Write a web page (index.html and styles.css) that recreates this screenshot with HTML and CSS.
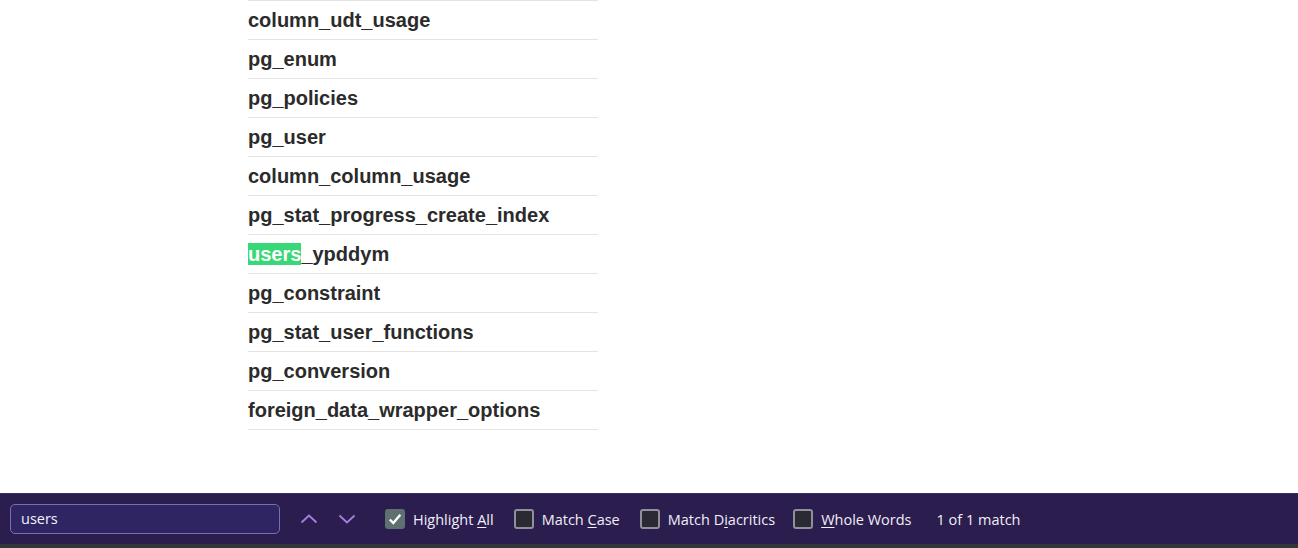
FILE: index.html
```html
<!DOCTYPE html>
<html>
<head>
<meta charset="utf-8">
<link rel="stylesheet" href="styles.css">
</head>
<body>
<div class="page">
  <ul class="tables">
    <li>column_udt_usage</li>
    <li>pg_enum</li>
    <li>pg_policies</li>
    <li>pg_user</li>
    <li>column_column_usage</li>
    <li>pg_stat_progress_create_index</li>
    <li><mark class="hit">users</mark>_ypddym</li>
    <li>pg_constraint</li>
    <li>pg_stat_user_functions</li>
    <li>pg_conversion</li>
    <li>foreign_data_wrapper_options</li>
  </ul>
</div>
<div class="findbar">
  <div class="find-input">users</div>
  <div class="nav">
    <svg class="chev" width="18" height="10" viewBox="0 0 18 10"><path d="M1.5 8.5 L9 1.5 L16.5 8.5" fill="none" stroke="#a67fe6" stroke-width="1.8"/></svg>
    <svg class="chev" width="18" height="10" viewBox="0 0 18 10"><path d="M1.5 1.5 L9 8.5 L16.5 1.5" fill="none" stroke="#a67fe6" stroke-width="1.8"/></svg>
  </div>
  <label class="opt opt-first"><span class="box checked"><svg width="14" height="12" viewBox="0 0 14 12"><path d="M1.8 6.5 L5.3 10 L12.3 1.8" fill="none" stroke="#fff" stroke-width="2.4"/></svg></span><span class="lbl">Highlight <u>A</u>ll</span></label>
  <label class="opt"><span class="box"></span><span class="lbl">Match <u>C</u>ase</span></label>
  <label class="opt"><span class="box"></span><span class="lbl">Match D<u>i</u>acritics</span></label>
  <label class="opt opt-tight"><span class="box"></span><span class="lbl"><u>W</u>hole Words</span></label>
  <span class="status">1 of 1 match</span>
</div>
<div class="bottom-strip"></div>
</body>
</html>
```
FILE: styles.css
```css
html, body {
  margin: 0;
  padding: 0;
  background: #ffffff;
  width: 1298px;
  height: 548px;
  overflow: hidden;
}
.page {
  height: 493px;
  padding-left: 248px;
  box-sizing: border-box;
}
.tables {
  list-style: none;
  margin: 0;
  padding: 0;
  width: 350px;
  border-top: 1px solid #e4e4e4;
}
.tables li {
  height: 38px;
  line-height: 38px;
  border-bottom: 1px solid #e4e4e4;
  font-family: "Liberation Sans", Arial, sans-serif;
  font-weight: bold;
  font-size: 20px;
  color: #2b2b2b;
  white-space: nowrap;
}
.hit {
  background: #38d878;
  color: #ffffff;
  padding: 0;
}
.findbar {
  height: 51px;
  background: #2b1d4e;
  border-top: 1px solid #3a2d63;
  box-sizing: border-box;
  display: flex;
  align-items: center;
  font-family: "Open Sans", "Noto Sans", sans-serif;
  font-size: 14.5px;
  color: #f0eef8;
}
.find-input {
  margin-left: 10px;
  width: 270px;
  height: 30px;
  box-sizing: border-box;
  border: 1px solid #7a6fa8;
  border-radius: 5px;
  background: #2e2562;
  padding-left: 10px;
  line-height: 28px;
  color: #f4f2ff;
}
.nav {
  display: flex;
  gap: 20px;
  margin-left: 20px;
  align-items: center;
}
.opt {
  display: flex;
  align-items: center;
  margin-left: 20px;
  white-space: nowrap;
}
.opt-first {
  margin-left: 29px;
}
.opt-tight {
  margin-left: 18px;
}
.lbl {
  white-space: pre;
}
.box {
  width: 20px;
  height: 20px;
  box-sizing: border-box;
  border: 2px solid #8f8f9d;
  border-radius: 3px;
  background: #2b2a33;
  margin-right: 8px;
  display: flex;
  align-items: center;
  justify-content: center;
}
.box.checked {
  background: #5f7070;
  border-color: #5f7070;
}
.opt u {
  text-decoration: underline;
  text-underline-offset: 2px;
}
.status {
  margin-left: 25px;
  white-space: nowrap;
}
.bottom-strip {
  height: 4px;
  background: #31383b;
}
```
